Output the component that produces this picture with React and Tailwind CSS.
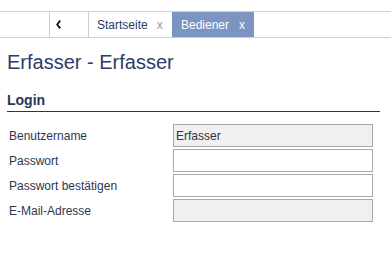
import React from 'react';

const rows = [
  { label: 'Benutzername', value: 'Erfasser', disabled: true },
  { label: 'Passwort', value: '', disabled: false },
  { label: 'Passwort bestätigen', value: '', disabled: false },
  { label: 'E-Mail-Adresse', value: '', disabled: true },
];

export default function App() {
  return (
    <div
      className="w-[391px] h-[258px] bg-white overflow-hidden text-[#2c3652]"
      style={{ fontFamily: "'Liberation Sans', Arial, sans-serif" }}
    >
      <div className="h-[11px]" />

      {/* tab bar */}
      <div className="flex h-[27px] border-t border-b border-[#cfcfcf] text-[12px]">
        <div className="w-[50px] border-r border-[#cfcfcf]" />
        <div className="w-[39px] flex items-center pl-[6px] border-r border-[#cfcfcf]">
          <svg width="5" height="9" viewBox="0 0 5 9">
            <path d="M4.2 0.6 L1.2 4.5 L4.2 8.4" fill="none" stroke="#111" strokeWidth="1.8" />
          </svg>
        </div>
        <div className="w-[83px] flex items-center pl-[8px] text-[#2c3a5e]">
          <span>Startseite</span>
          <span className="ml-[9px] text-[#9a9a9a]">x</span>
        </div>
        <div className="w-[82px] flex items-center pl-[9px] bg-[#7b94c2] text-white">
          <span>Bediener</span>
          <span className="ml-[10px]">x</span>
        </div>
      </div>

      <h1 className="mt-[12px] ml-[7px] text-[20px] leading-[24px] text-[#2f3c63]">
        Erfasser - Erfasser
      </h1>

      <div className="mt-[18px] ml-[7px] w-[373px] pb-[3px] border-b border-[#2a3556]">
        <h2 className="text-[14px] leading-[16px] font-bold text-[#2a3556]">Login</h2>
      </div>

      <div className="mt-[12px] flex flex-col gap-[2px] text-[12px]">
        {rows.map((r) => (
          <div key={r.label} className="flex items-center h-[23px]">
            <div className="w-[173px] pl-[9px]">{r.label}</div>
            <div
              className={
                'w-[200px] h-[23px] border border-[#a8a8a8] flex items-center pl-[2px] text-[#2c3448] ' +
                (r.disabled ? 'bg-[#f0f0f0]' : 'bg-white')
              }
            >
              {r.value}
            </div>
          </div>
        ))}
      </div>
    </div>
  );
}
